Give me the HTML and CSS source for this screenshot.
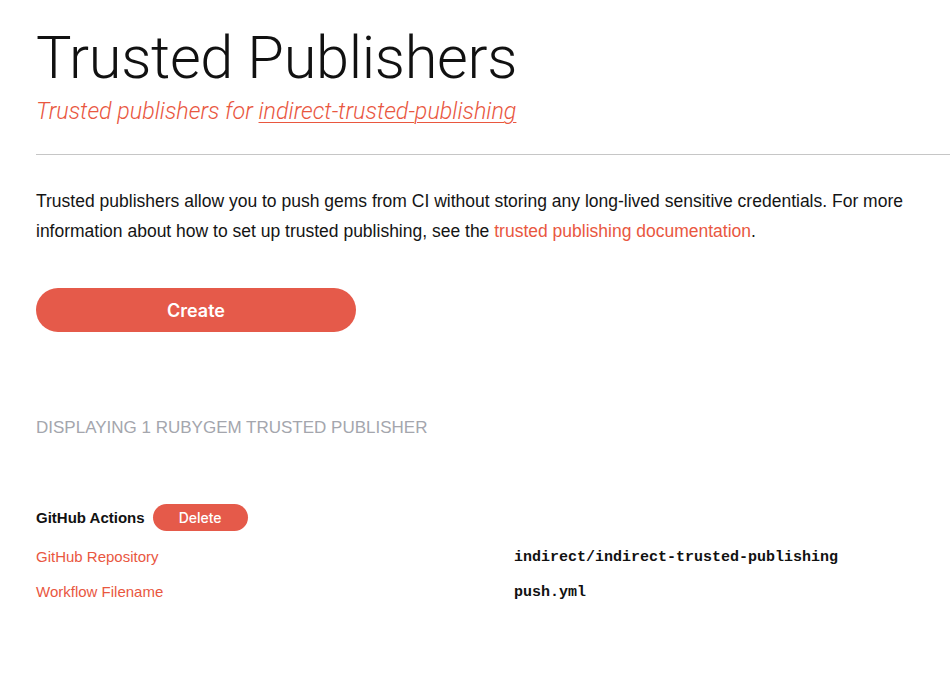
FILE: index.html
```html
<!DOCTYPE html>
<html>
<head>
<meta charset="utf-8">
<link rel="stylesheet" href="styles.css">
</head>
<body>
<main class="page">
  <header class="head">
    <h1 class="title">Trusted Publishers</h1>
    <p class="subtitle">Trusted publishers for <a href="#" class="sublink">indirect-trusted-publishing</a></p>
  </header>
  <hr class="rule">
  <p class="intro">Trusted publishers allow you to push gems from CI without storing any long-lived sensitive credentials. For more information about how to set up trusted publishing, see the <a href="#" class="link">trusted publishing documentation</a>.</p>
  <button class="btn-create">Create</button>
  <p class="count">Displaying 1 RubyGem trusted publisher</p>
  <section class="publisher">
    <div class="pub-head">
      <span class="pub-name">GitHub Actions</span>
      <button class="btn-delete">Delete</button>
    </div>
    <dl class="fields">
      <dt class="key">GitHub Repository</dt>
      <dd class="val">indirect/indirect-trusted-publishing</dd>
      <dt class="key">Workflow Filename</dt>
      <dd class="val">push.yml</dd>
    </dl>
  </section>
</main>
</body>
</html>
```
FILE: styles.css
```css
html, body {
  margin: 0;
  padding: 0;
  background: #fff;
  overflow: hidden;
}
.page {
  padding: 20px 0 0 36px;
  font-family: "Liberation Sans", Arial, sans-serif;
  color: #141414;
}
.title {
  margin: 0;
  font-family: Roboto, sans-serif;
  font-weight: 300;
  font-size: 59.5px;
  line-height: 76px;
  color: #111;
  letter-spacing: -0.3px;
}
.subtitle {
  margin: 0;
  font-family: Roboto, sans-serif;
  font-weight: 300;
  font-style: italic;
  font-size: 23.3px;
  line-height: 30px;
  color: #e9573f;
}
.sublink {
  color: #e9573f;
  text-decoration: underline;
  text-decoration-thickness: 1px;
  text-underline-offset: 3px;
}
.rule {
  border: 0;
  border-top: 1px solid #c6c6c6;
  margin: 28px 0 0 0;
}
.intro {
  margin: 31px 0 0 0;
  font-size: 17.5px;
  line-height: 30px;
  max-width: 880px;
}
.link {
  color: #e9573f;
  text-decoration: none;
}
.btn-create {
  display: block;
  margin-top: 42px;
  width: 320px;
  height: 44px;
  border: 0;
  border-radius: 22px;
  background: #e55a4a;
  color: #fff;
  font-family: Inter, "Liberation Sans", sans-serif;
  font-weight: 600;
  font-size: 18px;
  padding: 0;
}
.count {
  margin: 84px 0 0 0;
  font-size: 17px;
  line-height: 24px;
  color: #a4a6ad;
  text-transform: uppercase;
}
.publisher {
  margin-top: 63px;
}
.pub-head {
  display: flex;
  align-items: center;
  gap: 8px;
  height: 28px;
}
.pub-name {
  font-weight: 700;
  font-size: 15px;
  color: #111;
}
.btn-delete {
  width: 95px;
  height: 27px;
  border: 0;
  border-radius: 14px;
  background: #e55a4a;
  color: #fff;
  font-family: Inter, "Liberation Sans", sans-serif;
  font-weight: 500;
  font-size: 14px;
  padding: 0;
}
.fields {
  display: grid;
  grid-template-columns: 478px 1fr;
  row-gap: 14px;
  margin: 16px 0 0 0;
}
.key {
  font-size: 15px;
  line-height: 20px;
  color: #e9573f;
  margin: 0;
}
.val {
  margin: 0;
  font-family: "Liberation Mono", "Courier New", monospace;
  font-weight: 700;
  font-size: 15px;
  line-height: 20px;
  color: #111;
  padding-top: 1px;
}
```
